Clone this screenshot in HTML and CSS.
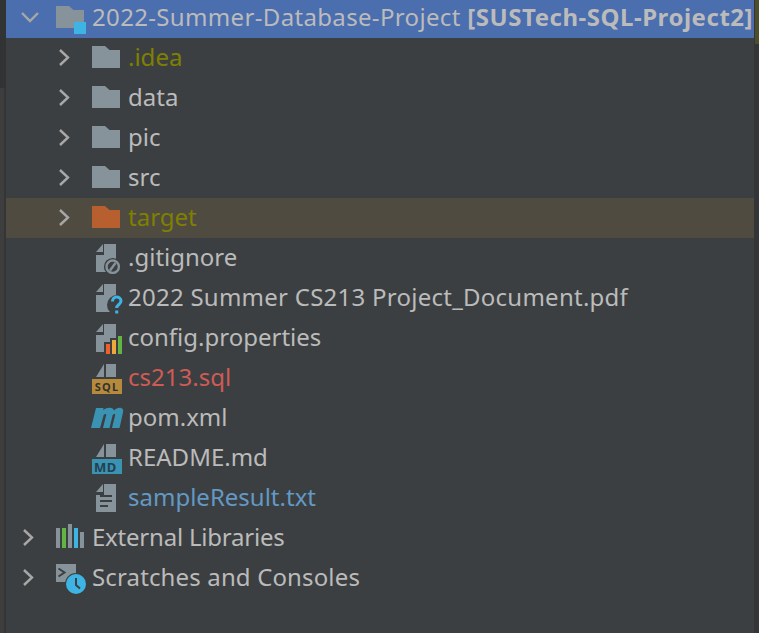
FILE: index.html
```html
<!DOCTYPE html>
<html lang="en">
<head>
<meta charset="utf-8">
<title>Project tree</title>
<link rel="stylesheet" href="styles.css">
</head>
<body>
<div class="window">
  <div class="gutter"><div class="gutter-top"></div></div>
  <ul class="tree">
    <li class="row selected level-0">
      <svg class="chev" viewBox="0 0 20 20"><path d="M2 5l8 8 8-8"/></svg>
      <svg class="icon" viewBox="0 0 30 30"><path class="f-grey" d="M0 3h13l4.500 4H28v18H0z"/><rect class="f-blue" x="18" y="19" width="12" height="12"/></svg>
      <span class="label track-title">2022-Summer-Database-Project <b>[SUSTech-SQL-Project2]</b></span>
    </li>
    <li class="row level-1">
      <svg class="chev" viewBox="0 0 20 20"><path d="M4 2l8 7.500L4 17"/></svg>
      <svg class="icon" viewBox="0 0 30 30"><path class="f-grey" d="M0 3h13l4.500 4H28v18H0z"/></svg>
      <span class="label t-olive">.idea</span>
    </li>
    <li class="row level-1">
      <svg class="chev" viewBox="0 0 20 20"><path d="M4 2l8 7.500L4 17"/></svg>
      <svg class="icon" viewBox="0 0 30 30"><path class="f-grey" d="M0 3h13l4.500 4H28v18H0z"/></svg>
      <span class="label">data</span>
    </li>
    <li class="row level-1">
      <svg class="chev" viewBox="0 0 20 20"><path d="M4 2l8 7.500L4 17"/></svg>
      <svg class="icon" viewBox="0 0 30 30"><path class="f-grey" d="M0 3h13l4.500 4H28v18H0z"/></svg>
      <span class="label">pic</span>
    </li>
    <li class="row level-1">
      <svg class="chev" viewBox="0 0 20 20"><path d="M4 2l8 7.500L4 17"/></svg>
      <svg class="icon" viewBox="0 0 30 30"><path class="f-grey" d="M0 3h13l4.500 4H28v18H0z"/></svg>
      <span class="label">src</span>
    </li>
    <li class="row level-1 excluded">
      <svg class="chev" viewBox="0 0 20 20"><path d="M4 2l8 7.500L4 17"/></svg>
      <svg class="icon" viewBox="0 0 30 30"><path class="f-orange" d="M0 3h13l4.500 4H28v18H0z"/></svg>
      <span class="label t-olive">target</span>
    </li>
    <li class="row level-2">
      <svg class="icon" viewBox="0 0 30 30"><path class="f-grey" d="M12 1h12v28H4V12h8z"/><path class="f-grey" d="M4 9l7-8v8z"/><circle class="f-bg" cx="20.700" cy="23.700" r="8.800"/><circle class="s-grey" cx="20.700" cy="23.700" r="6.200"/><path class="s-grey" d="M18 27.500l5.500-7.500"/></svg>
      <span class="label">.gitignore</span>
    </li>
    <li class="row level-2">
      <svg class="icon" viewBox="0 0 30 30"><path class="f-grey" d="M12 1h12v28H4V12h8z"/><path class="f-grey" d="M4 9l7-8v8z"/><circle class="f-bg" cx="25" cy="22" r="10"/><path class="s-blue" d="M20.500 18.500c0-3 2-4.500 4.200-4.500s4.300 1.500 4.300 4c0 3.500-4.300 3.500-4.300 7"/><rect class="f-blue" x="23.200" y="27.500" width="3" height="3"/></svg>
      <span class="label track-doc">2022 Summer CS213 Project_Document.pdf</span>
    </li>
    <li class="row level-2">
      <svg class="icon" viewBox="0 0 30 30"><path class="f-grey" d="M12 1h12v28H4V12h8z"/><path class="f-grey" d="M4 9l7-8v8z"/><path class="f-bg" d="M12 31V19h6v-4h6v-4h7v20z"/><rect class="f-red" x="14" y="21" width="4" height="10"/><rect class="f-amber" x="20" y="17" width="4" height="14"/><rect class="f-green" x="26" y="13" width="4" height="18"/></svg>
      <span class="label">config.properties</span>
    </li>
    <li class="row level-2">
      <svg class="icon" viewBox="0 0 30 30"><path class="f-grey" d="M14 1h10v13H14z"/><path class="f-grey" d="M4 14L12 1v13z"/><rect class="f-gold" x="0" y="16" width="30" height="15"/><text class="badge badge-sql" x="15" y="28">SQL</text></svg>
      <span class="label t-red">cs213.sql</span>
    </li>
    <li class="row level-2">
      <svg class="icon" viewBox="0 0 30 30"><path class="f-teal" d="M-1 25L4 5h7.500l-.5 2C14 5 17 4.500 19 5c1.500.3 2.500 1 3 2.500 2-2 4.500-3 7-2.500 2 .5 2.500 2 2 4.500L27.500 25H20l3.200-13c.3-1.500-1.500-1.500-2.500 0L17.500 25H11l3.200-13c.3-1.500-1.500-1.500-2.500 0L8 25z"/></svg>
      <span class="label">pom.xml</span>
    </li>
    <li class="row level-2">
      <svg class="icon" viewBox="0 0 30 30"><path class="f-grey" d="M14 1h10v13H14z"/><path class="f-grey" d="M4 14L12 1v13z"/><rect class="f-teal" x="0" y="16" width="30" height="15"/><text class="badge badge-md" x="2" y="28.500">MD</text></svg>
      <span class="label">README.md</span>
    </li>
    <li class="row level-2">
      <svg class="icon" viewBox="0 0 30 30"><path class="f-grey" d="M12 1h12v28H4V12h8z"/><path class="f-grey" d="M4 9l7-8v8z"/><path class="s-dark" d="M8 13h12M8 18h12M8 23h8"/></svg>
      <span class="label t-blue">sampleResult.txt</span>
    </li>
    <li class="row level-0">
      <svg class="chev" viewBox="0 0 20 20"><path d="M4 2l8 7.500L4 17"/></svg>
      <svg class="icon" viewBox="0 0 30 30"><rect class="f-grey" x="0" y="5" width="4" height="20"/><rect class="f-green" x="6" y="5" width="4" height="20"/><rect class="f-grey" x="12" y="1" width="4" height="24"/><rect class="f-blue" x="18" y="5" width="4" height="20"/><rect class="f-grey" x="24" y="9" width="4" height="16"/></svg>
      <span class="label track-libs">External Libraries</span>
    </li>
    <li class="row level-0">
      <svg class="chev" viewBox="0 0 20 20"><path d="M4 2l8 7.500L4 17"/></svg>
      <svg class="icon" viewBox="0 0 30 30"><path class="f-grey" d="M0 1h20v18H0z"/><path class="s-dark" d="M2.500 5.500l6 4-6 4"/><circle class="f-bg" cx="20" cy="21" r="11"/><circle class="f-blue" cx="20" cy="21" r="10"/><path class="s-dark" d="M20 15v7l4 3.500"/></svg>
      <span class="label track-scratch">Scratches and Consoles</span>
    </li>
  </ul>
  <div class="rail"><div class="rail-mark"></div></div>
</div>
</body>
</html>
```

FILE: styles.css
```css
html, body { margin: 0; padding: 0; background: #3c3f41; }
.window {
  display: flex;
  width: 759px;
  height: 633px;
  overflow: hidden;
  background: #3c3f41;
  font-family: "Noto Sans", "Open Sans", sans-serif;
}
.gutter {
  width: 6px;
  flex: none;
  box-sizing: border-box;
  background: #3e3e3e;
  border-right: 2px solid #333537;
}
.gutter-top { width: 6px; height: 88px; background: #313335; }
.rail {
  width: 5px;
  flex: none;
  box-sizing: border-box;
  background: #333537;
  padding-left: 1px;
}
.rail-mark { height: 44px; background: #4d4e2c; }
.tree { list-style: none; margin: -2px 0 0; padding: 0; flex: 1; min-width: 0; }
.row {
  display: flex;
  align-items: center;
  height: 40px;
  color: #bbbbbb;
  font-size: 24px;
  white-space: nowrap;
}
.row.selected { background: #4b6eaf; }
.row.excluded { background: #4f4b41; }
.level-0 { padding-left: 14px; }
.level-1 { padding-left: 50px; }
.level-2 { padding-left: 86px; }
.chev {
  width: 20px;
  height: 20px;
  flex: none;
  margin-right: 16px;
  fill: none;
  stroke: #a7a7a7;
  stroke-width: 2.4;
}
.icon { width: 30px; height: 30px; flex: none; margin-right: 6px; overflow: visible; }
.label { line-height: 38px; padding-bottom: 2px; }
.label b { font-weight: 700; letter-spacing: 0.53px; }
.track-title { letter-spacing: 0.34px; }
.track-doc { letter-spacing: 0.25px; }
.track-libs { letter-spacing: -0.22px; }
.track-scratch { letter-spacing: 0.14px; }
.t-olive { color: #808000; }
.t-red { color: #cf5b56; }
.t-blue { color: #6399c4; }
.f-grey { fill: #87939a; }
.f-blue { fill: #3eb4e4; }
.f-orange { fill: #b85f2f; }
.f-bg { fill: #3c3f41; }
.f-red { fill: #ef5f2b; }
.f-amber { fill: #eda83b; }
.f-green { fill: #62b543; }
.f-gold { fill: #b68a3a; }
.f-teal { fill: #3a93b3; }
.s-grey { fill: none; stroke: #87939a; stroke-width: 2.4; }
.s-blue { fill: none; stroke: #3eb4e4; stroke-width: 3; }
.s-dark { fill: none; stroke: #3c3f41; stroke-width: 2; }
.badge { fill: #2f3133; font-family: "Noto Sans", sans-serif; font-weight: 700; }
.badge-sql { font-size: 11px; letter-spacing: 1.2px; text-anchor: middle; }
.badge-md { font-size: 13px; letter-spacing: 0.5px; fill: #25404f; }
```
